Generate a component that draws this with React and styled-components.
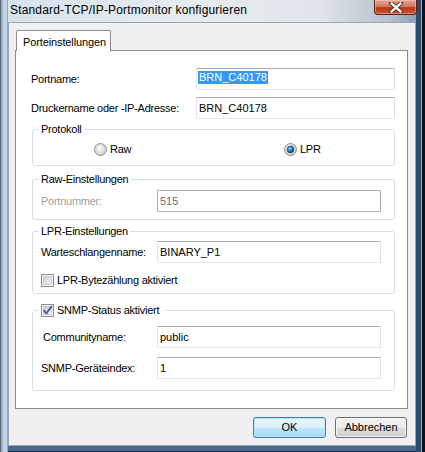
import React from "react";
import styled, { createGlobalStyle } from "styled-components";

const GlobalStyle = createGlobalStyle`
  html, body {
    margin: 0;
    padding: 0;
  }
  body {
    width: 425px;
    height: 452px;
    overflow: hidden;
    background: #1b2a3a;
    font-family: "Liberation Sans", Arial, sans-serif;
    font-size: 11px;
    color: #000;
  }
`;

const Window = styled.div`
  width: 425px;
  height: 452px;
  box-sizing: border-box;
  display: flex;
  flex-direction: column;
  padding: 0 9px 6px 8px;
  background:
    linear-gradient(90deg, #2d4b68 0 5px, #86b6dc 5px 6px, #0a121c 6px) right top / 9px 100% no-repeat,
    linear-gradient(90deg, #59606a 0 1px, #9db4ca 1px 3px, #bfd4ea 3px 7px, #9aa6b2 7px 8px) left top / 8px 100% no-repeat,
    linear-gradient(0deg, #142a42 0 1px, #45698f 1px 6px) left bottom / 100% 6px no-repeat,
    linear-gradient(90deg, #d6e1ec 0%, #e7ecf1 45%, #dfe5ea 75%, #b4c1cd 92%, #7f95aa 100%);
`;

const TitleBar = styled.div`
  height: 22px;
  display: flex;
  align-items: flex-start;
  justify-content: space-between;
`;

const Title = styled.div`
  padding: 3px 0 0 2px;
  font-size: 12px;
  line-height: 15px;
  color: #000;
  letter-spacing: 0.17px;
`;

const CloseButton = styled.div`
  width: 43px;
  height: 15px;
  margin-right: -1px;
  box-sizing: border-box;
  border: 1px solid #5a1e16;
  border-top: none;
  border-radius: 0 0 4px 4px;
  background: linear-gradient(180deg, #e8a493 0%, #d47860 45%, #b8391d 55%, #c9522f 100%);
  box-shadow: inset 0 0 0 1px rgba(255, 220, 210, 0.45);
  display: flex;
  align-items: center;
  justify-content: center;
`;

const Client = styled.div`
  flex: 1;
  display: flex;
  flex-direction: column;
  background: #f0f0f0;
  border: 1px solid #9da7b1;
  padding: 7px 7px 7px 6px;
`;

const TabStrip = styled.div`
  display: flex;
  padding-left: 1px;
  position: relative;
  z-index: 1;
`;

const Tab = styled.div`
  width: 95px;
  height: 21px;
  box-sizing: border-box;
  border: 1px solid #898c95;
  border-bottom: none;
  border-radius: 2px 2px 0 0;
  background: #fff;
  padding: 5px 0 0 6px;
  line-height: 13px;
  letter-spacing: -0.12px;
`;

const Panel = styled.div`
  flex: 1;
  margin-top: -1px;
  border: 1px solid #898c95;
  background: #fff;
  padding: 0 12px 0 15px;
  display: flex;
  flex-direction: column;
`;

const FieldRow = styled.div`
  display: grid;
  grid-template-columns: ${(p) => p.$label}px 1fr;
  align-items: center;
  margin-top: ${(p) => p.$top || 0}px;
`;

const Label = styled.div`
  line-height: 13px;
  letter-spacing: -0.25px;
  padding-left: ${(p) => p.$indent || 0}px;
  color: ${(p) => (p.$disabled ? "#a0a0a0" : "#000")};
`;

const TextBox = styled.div`
  height: 22px;
  box-sizing: border-box;
  border: 1px solid;
  border-color: ${(p) =>
    p.$disabled ? "#adb2b5" : "#abadb3 #dbdfe6 #e3e9ef #e2e3ea"};
  border-radius: 1px;
  background: #fff;
  padding-left: 2px;
  line-height: 20px;
  color: ${(p) => (p.$disabled ? "#6d6d6d" : "#000")};
  white-space: nowrap;
  overflow: hidden;
`;

const Selected = styled.span`
  display: inline-block;
  vertical-align: top;
  margin: 2px 0 0 -1px;
  padding: 0 1px;
  line-height: 13px;
  background: #3399ff;
  color: #fff;
`;

const Group = styled.fieldset`
  margin: ${(p) => p.$top}px 0 0 1px;
  border: 1px solid #d5dfe5;
  border-radius: 3px;
  padding: ${(p) => p.$pad};
  min-width: 0;
`;

const Legend = styled.legend`
  padding: 0 ${(p) => p.$right || 2}px 0 2px;
  margin-left: -2px;
  line-height: 13px;
  letter-spacing: -0.25px;
  display: flex;
  align-items: center;
`;

const RadioRow = styled.div`
  display: grid;
  grid-template-columns: 190px auto;
  padding-left: 53px;
`;

const Option = styled.div`
  display: flex;
  align-items: center;
  gap: ${(p) => p.$gap || 3}px;
  line-height: 13px;
  letter-spacing: -0.25px;
  margin-top: ${(p) => p.$top || 0}px;
`;

const Buttons = styled.div`
  display: flex;
  justify-content: flex-end;
  gap: 9px;
  margin-top: 8px;
  padding-right: 1px;
`;

const Button = styled.div`
  width: ${(p) => p.$width}px;
  height: 21px;
  box-sizing: border-box;
  border: 1px solid ${(p) => (p.$default ? "#3c7fb1" : "#707070")};
  border-radius: 3px;
  background: ${(p) =>
    p.$default
      ? "linear-gradient(180deg, #eaf6fd 0%, #d9f0fc 50%, #bee6fd 51%, #a7d9f5 100%)"
      : "linear-gradient(180deg, #f2f2f2 0%, #ebebeb 50%, #dddddd 51%, #cfcfcf 100%)"};
  box-shadow: inset 0 0 0 1px
    ${(p) => (p.$default ? "rgba(180, 230, 250, 0.9)" : "rgba(255, 255, 255, 0.7)")};
  display: flex;
  align-items: center;
  justify-content: center;
  line-height: 13px;
`;

const Radio = ({ checked }) => (
  <svg width="13" height="13" viewBox="0 0 13 13">
    <defs>
      <radialGradient id={checked ? "rg-on" : "rg-off"} cx="0.4" cy="0.35" r="0.7">
        <stop offset="0" stopColor="#ffffff" />
        <stop offset="1" stopColor="#c9c9c9" />
      </radialGradient>
      <radialGradient id="rg-dot" cx="0.4" cy="0.35" r="0.7">
        <stop offset="0" stopColor="#8fdcff" />
        <stop offset="0.5" stopColor="#1d7fc9" />
        <stop offset="1" stopColor="#0b3f7a" />
      </radialGradient>
    </defs>
    <circle cx="6.5" cy="6.5" r="6" fill={`url(#${checked ? "rg-on" : "rg-off"})`} stroke="#8b8e93" />
    <circle cx="6.5" cy="6.5" r="4.2" fill="none" stroke="#d8d8d8" strokeWidth="0.8" />
    {checked && <circle cx="6.5" cy="6.5" r="3.4" fill="url(#rg-dot)" stroke="#163e6a" strokeWidth="0.6" />}
  </svg>
);

const Check = ({ checked }) => (
  <svg width="13" height="13" viewBox="0 0 13 13">
    <defs>
      <linearGradient id="cb-in" x1="0" y1="0" x2="1" y2="1">
        <stop offset="0" stopColor="#c8ccd2" />
        <stop offset="1" stopColor="#f7f7f7" />
      </linearGradient>
    </defs>
    <rect x="0.5" y="0.5" width="12" height="12" fill="#f4f4f4" stroke="#8e8f8f" />
    <rect x="2.5" y="2.5" width="8" height="8" fill="url(#cb-in)" stroke="#b5b9bf" strokeWidth="0.6" />
    {checked && (
      <path d="M3 6.6 L5.4 9.4 L10.4 2.6" fill="none" stroke="#4a5e9c" strokeWidth="1.8" strokeLinecap="round" strokeLinejoin="round" />
    )}
  </svg>
);

const CloseGlyph = () => (
  <svg width="14" height="11" viewBox="0 0 14 11">
    <path d="M2 1 L12 10 M12 1 L2 10" stroke="#4a1a12" strokeWidth="4" strokeLinecap="square" />
    <path d="M2.5 1.5 L11.5 9.5 M11.5 1.5 L2.5 9.5" stroke="#ffffff" strokeWidth="2.4" strokeLinecap="square" />
  </svg>
);

const App = () => (
  <>
    <GlobalStyle />
    <Window>
      <TitleBar>
        <Title>Standard-TCP/IP-Portmonitor konfigurieren</Title>
        <CloseButton>
          <CloseGlyph />
        </CloseButton>
      </TitleBar>
      <Client>
        <TabStrip>
          <Tab>Porteinstellungen</Tab>
        </TabStrip>
        <Panel>
          <FieldRow $label={165} $top={17}>
            <Label>Portname:</Label>
            <TextBox>
              <Selected>BRN_C40178</Selected>
            </TextBox>
          </FieldRow>
          <FieldRow $label={165} $top={7}>
            <Label>Druckername oder -IP-Adresse:</Label>
            <TextBox>BRN_C40178</TextBox>
          </FieldRow>

          <Group $top={4} $pad="7px 8px 9px 8px">
            <Legend>Protokoll</Legend>
            <RadioRow>
              <Option>
                <Radio />
                Raw
              </Option>
              <Option>
                <Radio checked />
                LPR
              </Option>
            </RadioRow>
          </Group>

          <Group $top={7} $pad="4px 13px 7px 8px">
            <Legend>Raw-Einstellungen</Legend>
            <FieldRow $label={116}>
              <Label $disabled>Portnummer:</Label>
              <TextBox $disabled>515</TextBox>
            </FieldRow>
          </Group>

          <Group $top={5} $pad="3px 13px 6px 8px">
            <Legend>LPR-Einstellungen</Legend>
            <FieldRow $label={116}>
              <Label>Warteschlangenname:</Label>
              <TextBox>BINARY_P1</TextBox>
            </FieldRow>
            <Option $top={11}>
              <Check />
              LPR-Bytezählung aktiviert
            </Option>
          </Group>

          <Group $top={10} $pad="9px 13px 11px 8px">
            <Legend $right={6}>
              <Option>
                <Check checked />
                SNMP-Status aktiviert
              </Option>
            </Legend>
            <FieldRow $label={116}>
              <Label $indent={2}>Communityname:</Label>
              <TextBox>public</TextBox>
            </FieldRow>
            <FieldRow $label={116} $top={9}>
              <Label>SNMP-Geräteindex:</Label>
              <TextBox>1</TextBox>
            </FieldRow>
          </Group>
        </Panel>
        <Buttons>
          <Button $width={73} $default>
            OK
          </Button>
          <Button $width={72}>Abbrechen</Button>
        </Buttons>
      </Client>
    </Window>
  </>
);

export default App;
